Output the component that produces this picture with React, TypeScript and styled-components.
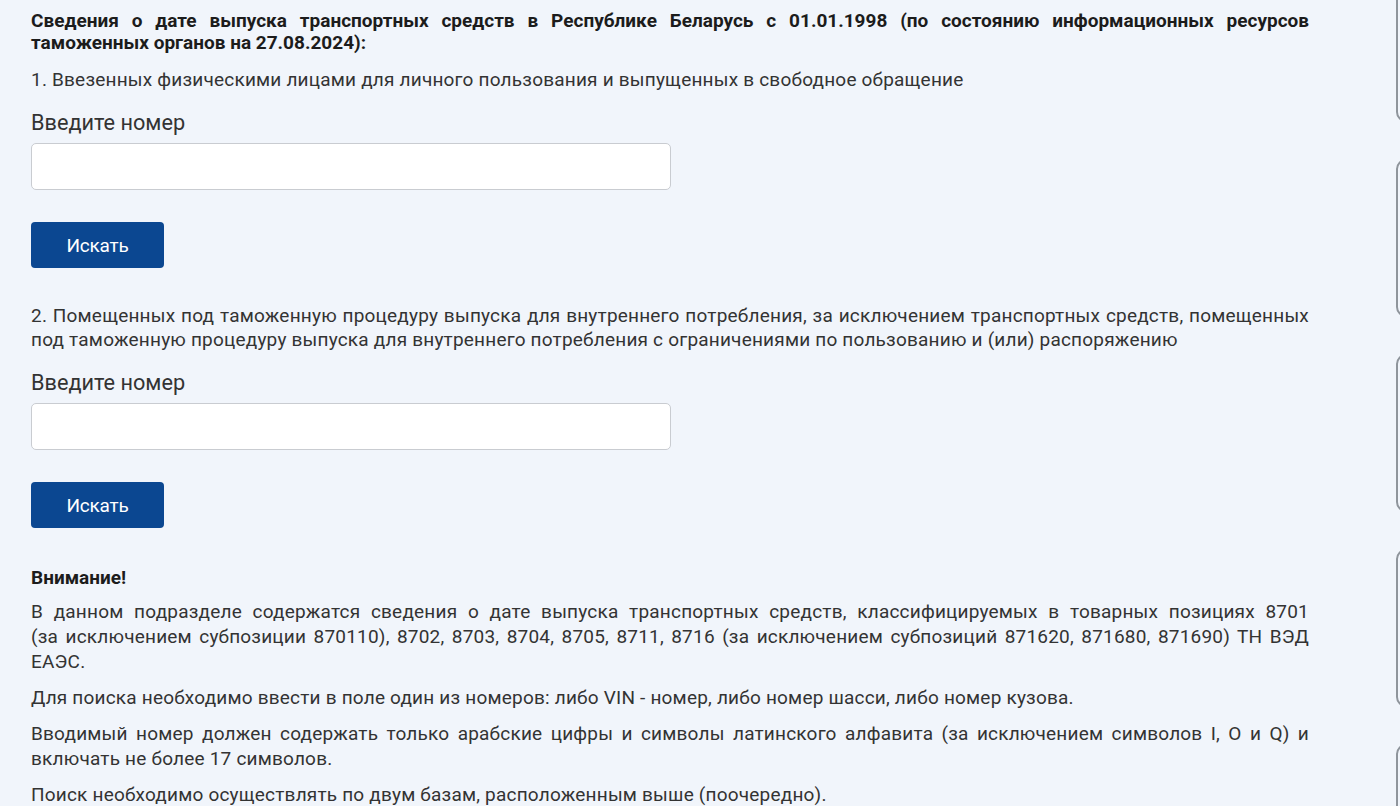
import styled, { createGlobalStyle } from "styled-components";

const GlobalStyle = createGlobalStyle`
  html, body {
    margin: 0;
    padding: 0;
    background: #f1f5fb;
    overflow: hidden;
  }
  body {
    font-family: Roboto, "Noto Sans", Arial, sans-serif;
    color: #333;
  }
`

const sections = [
    "1. Ввезенных физическими лицами для личного пользования и выпущенных в свободное обращение",
    "2. Помещенных под таможенную процедуру выпуска для внутреннего потребления, за исключением транспортных средств, помещенных под таможенную процедуру выпуска для внутреннего потребления с ограничениями по пользованию и (или) распоряжению",
]

// nbsp keeps "(за исключением" together, as the site wraps it
const notes = [
    "В данном подразделе содержатся сведения о дате выпуска транспортных средств, классифицируемых в товарных позициях 8701 (за\u00A0исключением субпозиции 870110), 8702, 8703, 8704, 8705, 8711, 8716 (за исключением субпозиций 871620, 871680, 871690) ТН ВЭД ЕАЭС.",
    "Для поиска необходимо ввести в поле один из номеров: либо VIN - номер, либо номер шасси, либо номер кузова.",
    "Вводимый номер должен содержать только арабские цифры и символы латинского алфавита (за исключением символов I, O и Q) и включать не более 17 символов.",
    "Поиск необходимо осуществлять по двум базам, расположенным выше (поочередно).",
]

export default function App() {
    return (
        <>
            <GlobalStyle/>
            <Page>
                <Main>
                    <Title>
                        Сведения о дате выпуска транспортных средств в Республике Беларусь с 01.01.1998 (по состоянию информационных ресурсов таможенных органов на 27.08.2024):
                    </Title>
                    {sections.map((text, i) => (
                        <SearchBlock key={i} $first={i === 0}>
                            <SectionText>{text}</SectionText>
                            <Label>Введите номер</Label>
                            <Input type="text"/>
                            <Button>Искать</Button>
                        </SearchBlock>
                    ))}
                    <Notice>
                        <NoticeTitle>Внимание!</NoticeTitle>
                        {notes.map((text, i) => (
                            <Note key={i}>{text}</Note>
                        ))}
                    </Notice>
                </Main>
                <Sidebar>
                    {[0, 1, 2, 3, 4].map(i => <SideCard key={i}/>)}
                </Sidebar>
            </Page>
        </>
    )
}

const Page = styled.div`
  display: flex;
  flex-direction: row;
  align-items: flex-start;
  height: 806px;
  overflow: hidden;
`

const Main = styled.main`
  width: 1278px;
  flex-shrink: 0;
  padding: 10px 0 0 31px;
`

const Title = styled.div`
  font-size: 19px;
  line-height: 22px;
  font-weight: 700;
  color: #1c1c1c;
  text-align: justify;
`

const SearchBlock = styled.section<{ $first: boolean }>`
  display: flex;
  flex-direction: column;
  align-items: flex-start;
  margin-top: ${p => p.$first ? "14px" : "36px"};
`

const SectionText = styled.p`
  margin: 0;
  width: 100%;
  font-size: 19px;
  line-height: 24px;
  letter-spacing: 0.2px;
  text-align: justify;
  color: #333;
`

const Label = styled.label`
  margin-top: 18px;
  font-size: 21.7px;
  line-height: 26px;
  color: #333;
`

const Input = styled.input`
  margin-top: 7px;
  box-sizing: border-box;
  width: 640px;
  height: 47px;
  background: #fff;
  border: 1.5px solid #c9ccd1;
  border-radius: 5px;
  outline: 0;
  padding: 0 12px;
  font-size: 18px;
  font-family: inherit;
`

const Button = styled.button`
  margin-top: 32px;
  width: 133px;
  height: 46px;
  border: 0;
  border-radius: 4px;
  background: #0b4791;
  color: #fff;
  font-family: Roboto, Arial, sans-serif;
  font-size: 19px;
  letter-spacing: -0.2px;
  cursor: pointer;
`

const Notice = styled.div`
  margin-top: 38px;
`

const NoticeTitle = styled.div`
  font-size: 19px;
  line-height: 24px;
  font-weight: 700;
  color: #1c1c1c;
`

const Note = styled.p`
  margin: 9px 0 0;
  font-size: 19px;
  line-height: 25px;
  letter-spacing: 0.2px;
  text-align: justify;
  color: #333;
  & + & {
    margin-top: 11px;
  }
`

const Sidebar = styled.aside`
  margin-left: 87px;
  margin-top: -36px;
  display: flex;
  flex-direction: column;
  gap: 37px;
  flex-shrink: 0;
`

const SideCard = styled.div`
  width: 200px;
  height: 158px;
  box-sizing: border-box;
  border: 2px solid #8f959c;
  border-radius: 10px;
`
